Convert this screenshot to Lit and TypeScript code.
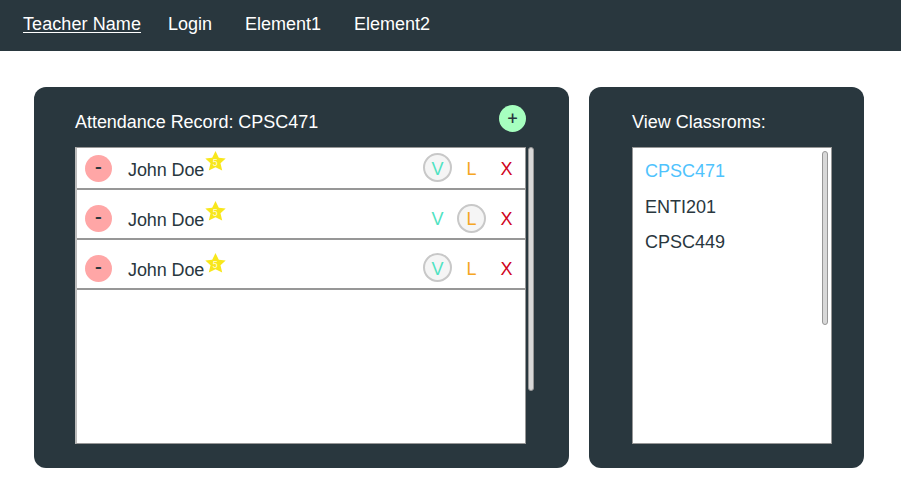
import { LitElement, html, css } from "lit";
import { customElement, property } from "lit/decorators.js";
import { classMap } from "lit/directives/class-map.js";

type Mark = "V" | "L" | "X";

interface Student {
  name: string;
  stars: number;
  mark: Mark;
}

const students: Student[] = [
  { name: "John Doe", stars: 5, mark: "V" },
  { name: "John Doe", stars: 5, mark: "L" },
  { name: "John Doe", stars: 5, mark: "V" },
];

const classrooms = ["CPSC471", "ENTI201", "CPSC449"];

@customElement("student-row")
class StudentRow extends LitElement {
  @property({ attribute: false }) student!: Student;

  static styles = css`
    :host {
      display: flex;
      align-items: flex-end;
      box-sizing: border-box;
      height: 50px;
      padding: 0 4px 6px 8px;
      border-bottom: 2px solid #979797;
      color: #29373e;
    }
    .remove {
      width: 27px;
      height: 27px;
      border-radius: 50%;
      background: #ffa6a6;
      text-align: center;
      font: 500 20px/24px Roboto, sans-serif;
    }
    .name {
      margin: 0 0 2px 16px;
      line-height: 20px;
      width: 77px;
      letter-spacing: -0.1px;
      white-space: nowrap;
    }
    .star {
      width: 21px;
      height: 21px;
      margin-bottom: var(--star-lift, 11px);
    }
    .star polygon {
      fill: #f8e71c;
    }
    .star text {
      fill: #fff;
      fill-opacity: 0.85;
      font: 9.5px Roboto, sans-serif;
      text-anchor: middle;
    }
    .marks {
      display: flex;
      gap: 5px;
      margin-left: auto;
    }
    .mark {
      position: relative;
      width: 29px;
      height: 29px;
      text-align: center;
      font: 18px/33px "Liberation Sans", Arial, sans-serif;
    }
    .letter {
      position: relative;
    }
    .ring {
      position: absolute;
      inset: 0;
      box-sizing: border-box;
      border: 2px solid #c8c8c8;
      border-radius: 50%;
      background: #f5f5f5;
    }
    .L .ring {
      top: 1px;
      bottom: -1px;
    }
    .V { color: #50e3c2; }
    .L { color: #f5a623; }
    .X { color: #d0021b; margin-left: 1px; }
  `;

  render() {
    const s = this.student;
    return html`
      <div class="remove">-</div>
      <div class="name">${s.name}</div>
      <svg class="star" viewBox="0 0 21 21">
        <polygon points="10.5,1 13.8,7.8 20.7,8.4 15.5,13.3 17.2,20.6 10.5,17.2 3.8,20.6 5.5,13.3 0.3,8.4 7.2,7.8"></polygon>
        <text x="9.9" y="15.6">${s.stars}</text>
      </svg>
      <div class="marks">
        ${(["V", "L", "X"] as Mark[]).map(
          (m) => html`<div class=${classMap({ mark: true, [m]: true })}>
            ${m === s.mark ? html`<span class="ring"></span>` : null}<span class="letter">${m}</span>
          </div>`
        )}
      </div>
    `;
  }
}

@customElement("app-root")
class AppRoot extends LitElement {
  static styles = css`
    :host {
      display: block;
      height: 503px;
      overflow: hidden;
      background: #fff;
      font: 18px/20px "Liberation Sans", Arial, sans-serif;
      color: #29373e;
    }
    .nav {
      display: flex;
      box-sizing: border-box;
      width: 901px;
      height: 51px;
      padding: 14px 23px;
      background: #29373e;
      color: #fff;
    }
    .link { white-space: nowrap; }
    .user {
      width: 145px;
      letter-spacing: 0.08px;
      text-decoration: underline;
      text-decoration-thickness: 1px;
      text-underline-offset: 2px;
    }
    .login { width: 77px; }
    .first { width: 109px; }
    .page {
      display: flex;
      gap: 20px;
      padding: 36px 0 0 34px;
    }
    .panel {
      box-sizing: border-box;
      height: 381px;
      border-radius: 12px;
      background: #29373e;
    }
    .attendance {
      width: 535px;
      padding: 18px 35px 0 41px;
    }
    .classes {
      width: 275px;
      padding: 18px 32px 0 43px;
    }
    .head {
      display: flex;
      justify-content: space-between;
      height: 42px;
      color: #fff;
    }
    .attendance .head { margin-right: 8px; }
    .title { margin-top: 7px; }
    .attendance .title { letter-spacing: -0.04px; }
    .add {
      width: 27px;
      height: 27px;
      border-radius: 50%;
      background: #a6ffbf;
      color: #29373e;
      text-align: center;
      font: 18px/27px Roboto, sans-serif;
    }
    .body {
      display: flex;
      gap: 2px;
    }
    .list {
      box-sizing: border-box;
      height: 297px;
      border: 1px solid #979797;
      background: #fff;
      overflow: hidden;
    }
    .students {
      width: 451px;
      border-left-width: 2px;
      border-left-color: #bcbcbc;
    }
    .students student-row:first-child { margin-top: -8px; }
    .students student-row:last-child { --star-lift: 9px; }
    .rooms {
      display: flex;
      justify-content: space-between;
      width: 200px;
      padding: 3px 3px 0 12px;
    }
    .room {
      margin-bottom: 15.5px;
    }
    .names { padding-top: 10px; }
    .room.active { color: #4fc3fd; }
    .thumb {
      box-sizing: border-box;
      width: 6px;
      border: 1px solid #979797;
      border-radius: 3px;
      background: #d8d8d8;
    }
    .tall { height: 244px; }
    .short { height: 174px; }
  `;

  render() {
    return html`
      <nav class="nav">
        <span class="link user">Teacher Name</span>
        <span class="link login">Login</span>
        <span class="link first">Element1</span>
        <span class="link">Element2</span>
      </nav>
      <main class="page">
        <section class="panel attendance">
          <div class="head">
            <div class="title">Attendance Record: CPSC471</div>
            <div class="add">+</div>
          </div>
          <div class="body">
            <div class="list students">
              ${students.map((s) => html`<student-row .student=${s}></student-row>`)}
            </div>
            <div class="thumb tall"></div>
          </div>
        </section>
        <section class="panel classes">
          <div class="head"><div class="title">View Classroms:</div></div>
          <div class="list rooms">
            <div class="names">
              ${classrooms.map(
                (c, i) => html`<div class=${classMap({ room: true, active: i === 0 })}>${c}</div>`
              )}
            </div>
            <div class="thumb short"></div>
          </div>
        </section>
      </main>
    `;
  }
}
